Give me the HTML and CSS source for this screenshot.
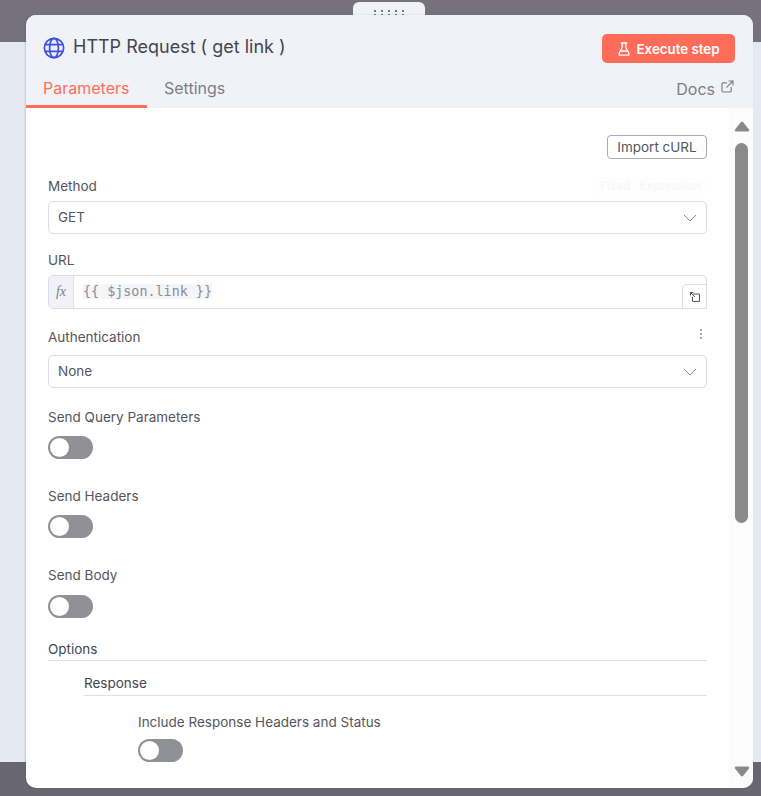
FILE: index.html
```html
<!DOCTYPE html>
<html lang="en">
<head>
<meta charset="utf-8">
<title>HTTP Request</title>
<link rel="stylesheet" href="styles.css">
</head>
<body>
<div class="backdrop">
  <div class="band band-top"></div>
  <div class="band-mid"></div>
  <div class="band band-bottom"></div>
</div>

<div class="handle" aria-hidden="true">
  <svg width="32" height="8" viewBox="0 0 32 8" fill="#77757f">
    <rect x="1" y="1" width="2" height="2"/><rect x="8" y="1" width="2" height="2"/><rect x="15" y="1" width="2" height="2"/><rect x="22" y="1" width="2" height="2"/><rect x="29" y="1" width="2" height="2"/>
    <rect x="1" y="5" width="2" height="2"/><rect x="8" y="5" width="2" height="2"/><rect x="15" y="5" width="2" height="2"/><rect x="22" y="5" width="2" height="2"/><rect x="29" y="5" width="2" height="2"/>
  </svg>
</div>

<main class="modal">
  <header class="head">
    <div class="title-row">
      <div class="title">
        <svg class="globe" width="22" height="22" viewBox="0 0 22 22" fill="none" stroke="#3f4fe0" stroke-width="1.7">
          <circle cx="11" cy="11" r="9.6"/>
          <ellipse cx="11" cy="11" rx="4.4" ry="9.6"/>
          <path d="M2.2 7.6h17.6M2.2 14.4h17.6"/>
        </svg>
        <span>HTTP Request ( get link )</span>
      </div>
      <button class="exec">
        <svg width="12" height="14" viewBox="0 0 12 14" fill="none" stroke="#fff" stroke-width="1.3" stroke-linejoin="round" stroke-linecap="round">
          <path d="M3.2 1h5.6M4.2 1v4.2L1.1 11.2c-.5 1 .1 2 1.2 2h7.4c1.1 0 1.7-1 1.2-2L7.8 5.2V1M2.8 9h6.4"/>
        </svg>
        <span>Execute step</span>
      </button>
    </div>
    <nav class="tabs">
      <a class="tab tab-active">Parameters</a>
      <a class="tab">Settings</a>
      <a class="docs">Docs
        <svg width="13" height="13" viewBox="0 0 13 13" fill="none" stroke="#7d7d87" stroke-width="1.2" stroke-linecap="round" stroke-linejoin="round">
          <path d="M10.2 7.4v3.4a1.2 1.2 0 0 1-1.2 1.2H2.2A1.2 1.2 0 0 1 1 10.800V4a1.2 1.2 0 0 1 1.2-1.2h3.4M8 1h4v4M12 1 5.800 7.200"/>
        </svg>
      </a>
    </nav>
  </header>

  <div class="content">
    <div class="form">
      <div class="import-row"><button class="import">Import cURL</button></div>

      <div class="label-row method-label">
        <label>Method</label>
        <div class="ghost-toggle"><span>Fixed</span><span>Expression</span></div>
      </div>
      <div class="select"><span>GET</span><svg class="chev" width="14" height="8" viewBox="0 0 14 8" fill="none" stroke="#8a8a94" stroke-width="1"><path d="M1 1l6 6 6-6"/></svg></div>

      <label class="label url-label">URL</label>
      <div class="url">
        <span class="fx">fx</span>
        <span class="expr"><code>{{ $json.link }}</code></span>
        <span class="expand">
          <svg width="12" height="12" viewBox="0 0 12 12" fill="none" stroke="#55555e" stroke-width="1"><path d="M1.500 1.500 6 6M1.500 1.500h3M1.500 1.500v3M4 3h6.500v7.500H3.500V6" stroke-linejoin="round"/></svg>
        </span>
      </div>

      <div class="label-row auth-label">
        <label>Authentication</label>
        <span class="dots"><i></i><i></i><i></i></span>
      </div>
      <div class="select"><span>None</span><svg class="chev" width="14" height="8" viewBox="0 0 14 8" fill="none" stroke="#8a8a94" stroke-width="1"><path d="M1 1l6 6 6-6"/></svg></div>

      <div class="field first-switch"><label class="label">Send Query Parameters</label><span class="switch"></span></div>
      <div class="field"><label class="label">Send Headers</label><span class="switch"></span></div>
      <div class="field"><label class="label">Send Body</label><span class="switch body-switch"></span></div>

      <div class="section options">Options</div>
      <div class="nested">
        <div class="section response">Response</div>
        <div class="nested-2"><label class="label">Include Response Headers and Status</label><span class="switch"></span></div>
      </div>
    </div>

    <div class="scroll" aria-hidden="true">
      <svg class="arrow" width="16" height="11" viewBox="0 0 16 11" fill="#8a8a8a"><path d="M8 .5c.5 0 .9.3 1.200.7l5.800 7.300c.6.800.1 1.900-.9 1.900H1.900c-1 0-1.500-1.100-.9-1.900l5.800-7.300C7.100.8 7.500.5 8 .5z"/></svg>
      <div class="track"><div class="thumb"></div></div>
      <svg class="arrow" width="16" height="11" viewBox="0 0 16 11" fill="#8a8a8a"><path d="M8 10.500c.5 0 .9-.3 1.200-.7L15 2.500c.6-.8.1-1.900-.9-1.900H1.900C.9.600.4 1.700 1 2.500l5.800 7.300c.3.400.7.700 1.200.7z"/></svg>
    </div>
  </div>
</main>
</body>
</html>
```

FILE: styles.css
```css
* { box-sizing: border-box; }
html, body { margin: 0; height: 796px; overflow: hidden; }
body { font-family: Inter, "Liberation Sans", sans-serif; color: #55555e; position: relative; background: #e6eaf3; }

.backdrop { display: flex; flex-direction: column; height: 796px; }
.band { background: #75727e; }
.band-top { height: 42px; }
.band-mid { flex: 1; background: #e5e9f2; }
.band-bottom { height: 34px; background: #686671; }

.handle {
  position: absolute; left: 353px; top: 2px; width: 72px; height: 16px;
  background: #f0f2f8; border-radius: 6px 6px 0 0;
  display: flex; justify-content: center; padding-top: 7px;
}
.handle svg { display: block; }

.modal {
  position: absolute; left: 26px; top: 15px; width: 727px; height: 773px;
  border-radius: 10px; overflow: hidden; background: #fff;
  display: flex; flex-direction: column;
  box-shadow: -1px 0 2px rgba(60, 60, 80, .18);
}

.head { background: #f0f2f8; height: 93px; flex: none; display: flex; flex-direction: column; }
.title-row { display: flex; align-items: center; justify-content: space-between; padding: 19px 18px 0 17px; height: 48px; }
.title { display: flex; align-items: center; gap: 8px; font-size: 18px; line-height: 24px; color: #45454e; font-weight: 400; margin-top: -3px; }
.globe { display: block; margin-top: 1px; }
.exec {
  width: 133px; height: 29px; border: 0; border-radius: 5px; background: #ff6d5a; color: #fff;
  display: flex; align-items: center; justify-content: center; gap: 7px; padding: 0;
  font: 600 13.300px Inter, "Liberation Sans", sans-serif;
}
.tabs { display: flex; align-items: flex-end; flex: 1; position: relative; font-size: 16px; }
.tab { height: 45px; padding: 14px 18px 0 17px; line-height: 22px; color: #7d7d87; border-bottom: 3px solid transparent; }
.tab-active { color: #ff6d5a; border-bottom-color: #ff6d5a; width: 121px; }
.tab + .tab { padding-left: 17px; }
.docs { margin-left: auto; height: 45px; padding: 15px 19px 0 0; line-height: 22px; color: #7d7d87; display: flex; gap: 6px; }
.docs svg { margin-top: 2px; }

.content { flex: 1; display: flex; min-height: 0; }
.form { width: 703px; padding: 27px 22px 0 22px; flex: none; }
.import-row { display: flex; justify-content: flex-end; height: 24px; }
.import {
  width: 100px; height: 24px; border: 1px solid #a8abb6; border-radius: 4px; background: #fff; padding: 0;
  font: 400 13.500px Inter, "Liberation Sans", sans-serif; color: #55555e;
}
label, .label { font-size: 13.500px; line-height: 18px; color: #55555e; display: block; }
.label-row { display: flex; justify-content: space-between; align-items: center; height: 18px; }
.method-label { margin-top: 18px; margin-bottom: 6px; }
.ghost-toggle { display: flex; gap: 9px; font-size: 11.500px; font-weight: 600; color: #f5f8f6; background: #fdfefd; padding: 2px 6px; }
.select {
  height: 33px; border: 1px solid #dcdce8; border-radius: 5px; background: #fff;
  display: flex; align-items: center; justify-content: space-between; padding: 0 9px 2px 9px;
  font-size: 13.500px; color: #55555e;
}
.select .chev { margin-top: 2px; }
.url-label { margin-top: 17px; margin-bottom: 6px; }
.url { height: 34px; border: 1px solid #dcdce8; border-radius: 5px; display: flex; align-items: stretch; position: relative; }
.fx {
  width: 25px; flex: none; background: #f0f2f8; border-right: 1px solid #dcdce8; border-radius: 4px 0 0 4px;
  font: italic 14px "Liberation Serif", serif; color: #7d7d87; display: flex; align-items: center; justify-content: center;
}
.expr { padding-left: 9px; display: flex; align-items: center; padding-bottom: 1px; }
.expr code { font: 13.400px "DejaVu Sans Mono", monospace; line-height: 15px; background: #f4f5f8; color: #8c8c96; }
.expand {
  position: absolute; right: -1px; bottom: -1px; width: 25px; height: 25px;
  border: 1px solid #dcdce8; border-radius: 5px 0 0 0; background: #fff;
  display: flex; align-items: center; justify-content: center;
}
.auth-label { margin-top: 19px; margin-bottom: 9px; }
.dots { display: flex; flex-direction: column; gap: 1.500px; padding-right: 5px; margin-top: -6px; }
.dots i { width: 2.500px; height: 2.500px; background: #8a8a94; border-radius: 50%; display: block; }
.field { margin-top: 22px; height: 57px; }
.first-switch { margin-top: 20px; }
.switch { display: block; width: 45px; height: 23px; border-radius: 12px; background: #909097; position: relative; margin-top: 10px; }
.body-switch { margin-top: 11px; }
.switch::before { content: ""; position: absolute; left: 2px; top: 2px; width: 19px; height: 19px; border-radius: 50%; background: #fff; }
.section { font-size: 13.500px; line-height: 18px; font-weight: 400; color: #45454e; border-bottom: 1px solid #dcdfe8; }
.options { height: 23px; padding-top: 2px; margin-top: 15px; }
.nested { padding-left: 36px; }
.response { height: 22px; margin-top: 13px; }
.nested-2 { padding-left: 54px; margin-top: 17px; }
.nested-2 .switch { margin-top: 8px; }

.scroll { width: 24px; flex: none; background: #fcfcfd; padding: 13px 4px 0 5px; display: flex; flex-direction: column; align-items: center; }
.arrow { flex: none; display: block; }
.track { height: 634px; padding-top: 11px; width: 13px; }
.thumb { width: 13px; height: 380px; border-radius: 7px; background: #8a8a8a; }
```
